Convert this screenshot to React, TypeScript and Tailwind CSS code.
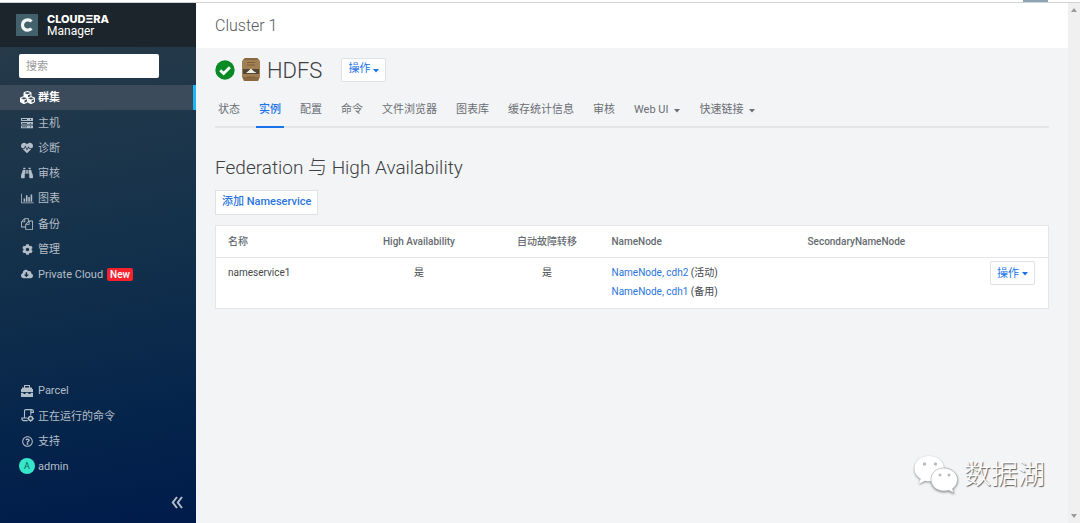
import { ReactNode } from "react";
import {
  FaBinoculars,
  FaCloudDownloadAlt,
  FaCog,
  FaCubes,
  FaHeartbeat,
  FaRegQuestionCircle,
} from "react-icons/fa";

type Item = { label: string; icon: ReactNode; active?: boolean; badge?: string };

function Caret() {
  return (
    <svg viewBox="0 0 6 4" className="mt-[2px] h-1 w-[6px]" fill="currentColor">
      <path d="M0 0h6L3 3.500z" />
    </svg>
  );
}

function ServerIcon() {
  return (
    <svg viewBox="0 0 12 12" className="h-3 w-3" fill="currentColor">
      <path fillRule="evenodd" d="M0 1h12v3H0zM1 2v1h5V2zM9 2v1h1V2zM0 5h12v2.6H0zM1 6v.8h5V6zM9 6v.8h1V6zM0 8.6h12v2.6H0zM1 9.5v.8h5v-.8zM9 9.5v.8h1v-.8z" />
    </svg>
  );
}

function ChartIcon() {
  return (
    <svg viewBox="0 0 2048 1792" className="h-[11px] w-[13px]" fill="currentColor">
      <path d="M640 896v512h-256v-512h256zm384-512v1024h-256v-1024h256zm1024 1152v128h-2048v-1536h128v1408h1920zm-640-896v768h-256v-768h256zm384-384v1152h-256v-1152h256z" />
    </svg>
  );
}

function FilesIcon() {
  return (
    <svg viewBox="0 0 1792 1792" className="h-3 w-3" fill="currentColor">
      <path d="M1696 384q40 0 68 28t28 68v1216q0 40-28 68t-68 28h-960q-40 0-68-28t-28-68v-288h-544q-40 0-68-28t-28-68v-672q0-40 20-88t48-76l408-408q28-28 76-48t88-20h416q40 0 68 28t28 68v328q68-40 128-40h416zm-544 213l-299 299h299v-299zm-640-384l-299 299h299v-299zm196 647l316-316v-416h-384v416q0 40-28 68t-68 28h-416v640h512v-256q0-40 20-88t48-76zm956 804v-1152h-384v416q0 40-28 68t-68 28h-416v640h896z" />
    </svg>
  );
}

function ParcelIcon() {
  return (
    <svg viewBox="0 0 12 13" className="h-[13px] w-3" fill="currentColor">
      <path d="M4 1h4v1H4zM3 1h1v3H3zM8 1h1v3H8zM1 3.500h10V5H1zM0 5h12v3H0zM0 8.800h2.500v1.200h2V8.800h3V10h2V8.800H12V13H0z" />
    </svg>
  );
}

function CommandsIcon() {
  return (
    <svg viewBox="0 0 13 13" className="h-[13px] w-[13px]" fill="none" stroke="currentColor" strokeWidth="1.1">
      <path d="M3.500 9V2.200q0-1.600 1.600-1.600h6q-1.300.2-1.300 1.600v3.600M11 .6q1.400.2 1.400 1.600v1.200H9.800M6.500 9H.8q0 2.600 1.800 2.600h4" />
      <circle cx="9.6" cy="9.6" r="2" strokeWidth="1.5" />
      <path d="M9.600 6.400v1M9.600 11.800v1M6.400 9.600h1M11.800 9.600h1" />
    </svg>
  );
}

const menu: Item[] = [
  { label: "群集", icon: <FaCubes size={15} />, active: true },
  { label: "主机", icon: <ServerIcon /> },
  { label: "诊断", icon: <FaHeartbeat size={12} /> },
  { label: "审核", icon: <FaBinoculars size={12} /> },
  { label: "图表", icon: <ChartIcon /> },
  { label: "备份", icon: <FilesIcon /> },
  { label: "管理", icon: <FaCog size={11} /> },
  { label: "Private Cloud", icon: <FaCloudDownloadAlt size={12} />, badge: "New" },
];

const bottomMenu: Item[] = [
  { label: "Parcel", icon: <ParcelIcon /> },
  { label: "正在运行的命令", icon: <CommandsIcon /> },
  { label: "支持", icon: <FaRegQuestionCircle size={11} /> },
  {
    label: "admin",
    icon: (
      <span className="flex h-4 w-4 shrink-0 items-center justify-center rounded-full bg-[#36e6c8] text-[9px] text-[#12615f]">A</span>
    ),
  },
];

const tabs = [
  { label: "状态" },
  { label: "实例", active: true },
  { label: "配置" },
  { label: "命令" },
  { label: "文件浏览器" },
  { label: "图表库" },
  { label: "缓存统计信息" },
  { label: "审核" },
  { label: "Web UI", menu: true },
  { label: "快速链接", menu: true },
];

function SideLink({ item }: { item: Item }) {
  return (
    <a
      href="#"
      className={
        item.active
          ? "flex items-center border-r-[3px] border-[#1fb6f5] bg-[#3b4b5b] pl-[19px] font-bold text-white"
          : "flex items-center pl-[19px] text-[#b4bec8]"
      }
    >
      <span className="mr-[3px] flex w-4 justify-center">{item.icon}</span>
      <span className="pt-[2px]">{item.label}</span>
      {item.badge && (
        <span className="ml-1 rounded-xs bg-[#f5222d] px-[3px] text-[10px] leading-[13px] font-medium text-white">{item.badge}</span>
      )}
    </a>
  );
}

function ActionButton() {
  return (
    <button className="inline-flex h-6 items-center gap-[3px] rounded-xs border border-[#dfe2e5] bg-white px-[6px] text-[11px] text-[#1a73e8]">
      操作
      <Caret />
    </button>
  );
}

function Sidebar() {
  return (
    <aside className="flex w-[196px] shrink-0 flex-col bg-linear-170 from-[#293c49] via-[#12304b] via-50% to-[#001b4b] text-[11px]">
      <div className="flex h-11 items-center gap-[9px] bg-[#1b252b] pl-4 text-white">
        <svg viewBox="0 0 22 22" className="h-[22px] w-[22px]">
          <rect width="22" height="22" fill="#42616a" />
          <path d="M15.500 7.500A5.200 5.200 0 1 0 15.500 14.500" fill="none" stroke="#f2f5f6" strokeWidth="3.2" />
        </svg>
        <div className="leading-3">
          <div className="font-[Inter] text-[11px] font-extrabold">CLOUDΞRA</div>
          <div className="text-xs leading-3">Manager</div>
        </div>
      </div>
      <div className="px-[19px] py-[7px]">
        <input
          aria-label="搜索"
          placeholder="搜索"
          className="block h-6 w-full rounded-xs bg-white px-[7px] text-[11px] text-gray-700 placeholder:text-[#999] max-w-[140px]"
        />
      </div>
      <nav className="grid h-[202px] auto-rows-fr">
        {menu.map((item) => (
          <SideLink key={item.label} item={item} />
        ))}
      </nav>
      <nav className="mt-auto grid h-[101px] auto-rows-fr">
        {bottomMenu.map((item) => (
          <SideLink key={item.label} item={item} />
        ))}
      </nav>
      <div className="flex justify-end pt-[17px] pr-[13px] pb-[14px]">
        <button aria-label="Collapse" className="text-[#b4bec8]">
          <svg viewBox="0 0 12 13" className="h-[13px] w-3" fill="none" stroke="currentColor" strokeWidth="2">
            <path d="M6 1L1.800 6.500 6 12M11 1L6.800 6.500 11 12" />
          </svg>
        </button>
      </div>
    </aside>
  );
}

function NameserviceTable() {
  return (
    <table className="mt-[10px] w-full table-fixed border border-[#e3e5e8] bg-white text-left text-[10px] text-[#43474b]">
      <colgroup>
        <col className="w-[128px]" />
        <col className="w-[151px]" />
        <col className="w-[105px]" />
        <col className="w-[196px]" />
        <col className="w-[150px]" />
        <col />
      </colgroup>
      <thead className="text-[#666b70]">
        <tr className="h-8 border-b border-[#e3e5e8]">
          <th className="px-3 font-medium">名称</th>
          <th className="text-center font-medium">High Availability</th>
          <th className="text-center font-medium">自动故障转移</th>
          <th className="px-3 font-medium">NameNode</th>
          <th className="px-3 font-medium">SecondaryNameNode</th>
          <th></th>
        </tr>
      </thead>
      <tbody>
        <tr className="h-[51px] align-top leading-[19px]">
          <td className="px-3 pt-[5px]">nameservice1</td>
          <td className="pt-[5px] text-center">是</td>
          <td className="pt-[5px] text-center">是</td>
          <td className="px-3 pt-[5px]">
            <div><a href="#" className="text-[#2a75dd]">NameNode, cdh2</a> (活动)</div>
            <div><a href="#" className="text-[#2a75dd]">NameNode, cdh1</a> (备用)</div>
          </td>
          <td></td>
          <td className="pt-[3px] pr-[13px] text-right"><ActionButton /></td>
        </tr>
      </tbody>
    </table>
  );
}

function Watermark() {
  return (
    <div className="absolute right-[35px] bottom-[28px] flex items-center gap-[5px]">
      <svg viewBox="0 0 46 40" className="h-10 w-[46px] drop-shadow-[0_1px_1px_#888]" fill="#fff">
        <path d="M16 1C7.500 1 1.500 6.500 1.500 13.500c0 4.500 2.400 8 6.200 10.300L6 29l6-3.200c1.500.4 3 .5 4.500.5C25 26.300 31 20.500 31 13.500S24.500 1 16 1z" />
        <path d="M30.500 13C23 13 18 18 18 24.500S23.500 36 31 36c1.700 0 3.200-.2 4.700-.7L41 38l-1.500-4.300c3-2.200 5-5.300 5-9.200C44.500 18 38 13 30.500 13z" stroke="#b4b6b9" strokeWidth="0.800" />
        <circle cx="11.500" cy="9" r="1.700" fill="#b9bbbe" />
        <circle cx="22.500" cy="9" r="1.700" fill="#b9bbbe" />
        <circle cx="27" cy="20" r="1.500" fill="#b9bbbe" />
        <circle cx="36" cy="20" r="1.500" fill="#b9bbbe" />
      </svg>
      <span className="text-[27px] leading-10 font-light text-white [text-shadow:1px_1px_1px_#555]">数据湖</span>
    </div>
  );
}

export default function App() {
  return (
    <div className="relative flex min-h-screen flex-col bg-[#f3f4f6] font-[Roboto,'Noto_Sans_CJK_SC',sans-serif]">
      <div className="flex h-[3px] justify-end border-b border-[#cfd2d6] bg-white pr-8">
        <div className="w-[25px] bg-[#8ea3b2]"></div>
      </div>
      <div className="flex flex-1">
        <Sidebar />
        <main className="min-w-0 flex-1">
          <header className="flex h-[45px] items-center bg-white px-[19px] text-base font-light text-[#55595e]">Cluster 1</header>
          <div className="px-[19px]">
            <div className="flex h-[43px] items-center">
              <svg viewBox="0 0 20 20" className="h-5 w-5">
                <circle cx="10" cy="10" r="9.700" fill="#0a8a24" />
                <path d="M5.200 10.200l3.400 3.300 6.300-6.300" fill="none" stroke="#fff" strokeWidth="2.800" />
              </svg>
              <svg viewBox="0 0 18 23" className="ml-[7px] h-[23px] w-[18px]">
                <path d="M3 0h12l3 3v16l-2 4H2l-2-4V3z" fill="#a07f52" />
                <path d="M3 0h12l2 2H1zM1 19h16l-1 4H2z" fill="#8a6940" />
                <path d="M5 4.500h8M5 7h8M5 19h8" stroke="#7d6038" />
                <rect x="1" y="11" width="16" height="5" fill="#514638" />
                <path d="M4 15l2.500-2 2.500-2.500 2.500 2.500 3 2z" fill="#f4efe3" />
              </svg>
              <h1 className="ml-[7px] pt-[2px] text-[22px] font-light text-[#3c4043]">HDFS</h1>
              <div className="ml-[19px] flex"><ActionButton /></div>
            </div>
            <nav className="flex h-[37px] gap-[13px] border-b-2 border-[#e3e5e8] text-[11px] text-[#6a6e73]">
              {tabs.map((tab) => (
                <a
                  key={tab.label}
                  href="#"
                  className={
                    tab.active
                      ? "-mb-[2px] flex items-center border-b-2 border-[#1a73e8] px-[3px] pt-[3px] font-medium text-[#1a73e8]"
                      : "flex items-center gap-[6px] px-[3px] pt-[3px]"
                  }
                >
                  {tab.label}
                  {tab.menu && <Caret />}
                </a>
              ))}
            </nav>
            <h2 className="mt-[26px] text-[19px] leading-7 font-light text-[#3c4043]">Federation 与 High Availability</h2>
            <button className="mt-2 block h-[25px] border border-[#dfe2e5] bg-white px-[6px] text-[11px] font-medium text-[#2a75dd]">
              添加 Nameservice
            </button>
            <NameserviceTable />
          </div>
        </main>
        <div className="flex w-3 shrink-0 flex-col items-center justify-between bg-[#f0f0f1] py-[5px] text-[#9a9a9a]">
          <svg viewBox="0 0 6 4" className="h-1 w-[6px]" fill="currentColor"><path d="M0 4L3 0l3 4z" /></svg>
          <svg viewBox="0 0 6 4" className="h-1 w-[6px]" fill="currentColor"><path d="M0 0l3 4 3-4z" /></svg>
        </div>
      </div>
      <Watermark />
    </div>
  );
}
